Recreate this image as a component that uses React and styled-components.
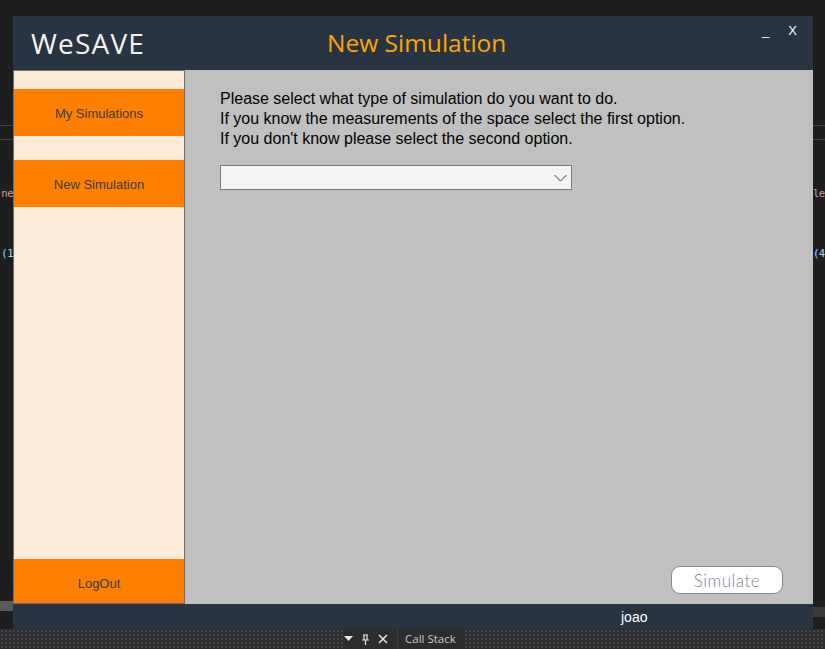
import React from "react";
import styled, { createGlobalStyle } from "styled-components";

const GlobalStyle = createGlobalStyle`
  html, body {
    margin: 0;
    padding: 0;
    background: #1e1e1e;
  }
  * { box-sizing: border-box; }
`;

// IDE behind the app window
const Screen = styled.div`
  width: 825px;
  height: 649px;
  display: flex;
  flex-direction: column;
  background: #1e1e1e;
  overflow: hidden;
`;

const Workspace = styled.div`
  display: flex;
  height: 629px;
`;

const Gutter = styled.div`
  width: ${({ w }) => w}px;
  display: flex;
  flex-direction: column;
  align-items: ${({ side }) => (side === "left" ? "flex-end" : "flex-start")};
  padding-top: 125px;
  overflow: hidden;
  font-family: "DejaVu Sans Mono", "Liberation Mono", monospace;
  font-size: 10.5px;
  letter-spacing: -0.5px;
`;

const GutterTabs = styled.div`
  align-self: stretch;
  height: 15px;
  border-top: 1px solid #3f3f46;
  border-bottom: 1px solid #3f3f46;
`;

const CodeText = styled.div`
  white-space: nowrap;
  color: ${({ c }) => c};
  margin-top: ${({ mt }) => mt}px;
  line-height: 14px;
`;

const GutterBand = styled.div`
  align-self: stretch;
  margin-top: auto;
  height: 10px;
  background: ${({ c }) => c};
  margin-bottom: ${({ mb }) => mb}px;
`;

const WindowSlot = styled.div`
  width: 800px;
  padding-top: 16px;
`;

const Window = styled.div`
  height: 613px;
  display: grid;
  grid-template-rows: 54px 1fr 25px;
  background: #c0c0c0;
`;

const TitleBar = styled.div`
  display: flex;
  align-items: center;
  background: #283442;
  padding-left: 18px;
`;

const Brand = styled.div`
  width: 296px;
  font-family: "Open Sans", "DejaVu Sans", sans-serif;
  font-size: 28px;
  letter-spacing: 1.2px;
  color: #f4f4f4;
  line-height: 1;
`;

const PageTitle = styled.div`
  font-family: "Open Sans", "DejaVu Sans", sans-serif;
  font-size: 24.5px;
  color: #ffa500;
  line-height: 1;
`;

const Controls = styled.div`
  margin-left: auto;
  align-self: flex-start;
  display: flex;
  gap: 19px;
  padding: 7px 16px 0 0;
  font-family: "Liberation Sans", Arial, sans-serif;
  font-size: 13px;
  color: #ffffff;
`;

const Body = styled.div`
  display: flex;
  min-height: 0;
`;

const Sidebar = styled.nav`
  width: 172px;
  display: flex;
  flex-direction: column;
  background: #faebd7;
  border: 1px solid #6d6d6d;
  padding-top: 18px;
`;

const NavButton = styled.div`
  height: ${({ h }) => h}px;
  margin-bottom: ${({ gap }) => gap || 0}px;
  margin-top: ${({ bottom }) => (bottom ? "auto" : "0")};
  padding-top: ${({ bottom }) => (bottom ? 4 : 2)}px;
  display: flex;
  align-items: center;
  justify-content: center;
  background: #ff8000;
  font-family: "Liberation Sans", Arial, sans-serif;
  font-size: 13px;
  color: #3c3c3c;
`;

const Main = styled.main`
  flex: 1;
  display: flex;
  flex-direction: column;
  padding: 19px 30px 10px 35px;
  background: #c0c0c0;
`;

const Intro = styled.p`
  margin: 0;
  font-family: "Liberation Sans", Arial, sans-serif;
  font-size: 16px;
  line-height: 20px;
  color: #000;
`;

const Select = styled.div`
  width: 352px;
  height: 25px;
  margin-top: 16px;
  display: flex;
  align-items: center;
  justify-content: flex-end;
  padding-right: 4px;
  background: #f4f4f4;
  border: 1px solid #7a7a7a;
`;

const SimulateButton = styled.button`
  margin-top: auto;
  align-self: flex-end;
  width: 112px;
  height: 28px;
  background: #fff;
  border: 1px solid #7d8a99;
  border-radius: 9px;
  font-family: "Lato", "Open Sans", sans-serif;
  font-weight: 300;
  font-size: 17px;
  letter-spacing: 0.5px;
  color: #7b8696;
  padding: 0;
`;

const Footer = styled.div`
  display: flex;
  align-items: center;
  padding: 1px 0 0 608px;
  background: #283442;
  font-family: "Liberation Sans", Arial, sans-serif;
  font-size: 14px;
  color: #fff;
`;

const PanelBar = styled.div`
  height: 20px;
  display: flex;
  align-items: center;
  background-color: #2d2d30;
  background-image: radial-gradient(#46464a 0.8px, transparent 0.9px);
  background-size: 4px 4px;
  padding-left: 344px;
  font-family: "Open Sans", "DejaVu Sans", sans-serif;
  font-size: 11.5px;
  color: #c8c8c8;
`;

const PanelIcons = styled.div`
  display: flex;
  align-items: center;
  gap: 8px;
  background: #2d2d30;
  padding-right: 9px;
  border-right: 1px solid #3f3f46;
  height: 20px;
`;

const PanelTab = styled.span`
  background: #2d2d30;
  padding: 0 8px 0 7px;
  line-height: 20px;
`;

const Chevron = () => (
  <svg width="13" height="8" viewBox="0 0 13 8">
    <polyline points="0.5,1 6.5,7 12.5,1" fill="none" stroke="#333" strokeWidth="1" />
  </svg>
);

const PanelGlyphs = () => (
  <PanelIcons>
    <svg width="9" height="6" viewBox="0 0 9 6">
      <polygon points="0,0 9,0 4.5,5" fill="#e8e8e8" />
    </svg>
    <svg width="9" height="11" viewBox="0 0 9 11">
      <path d="M2 1h5M3 1v5M6 1v5M1 6h7M4.5 6v5" stroke="#e8e8e8" strokeWidth="1.2" fill="none" />
    </svg>
    <svg width="10" height="10" viewBox="0 0 10 10">
      <path d="M1 1l8 8M9 1l-8 8" stroke="#e8e8e8" strokeWidth="1.5" />
    </svg>
  </PanelIcons>
);

const App = () => (
  <>
    <GlobalStyle />
    <Screen>
      <Workspace>
        <Gutter w={13} side="left">
          <GutterTabs />
          <CodeText c="#d69d85" mt={46}>ne</CodeText>
          <CodeText c="#9cdcfe" mt={46}>(1</CodeText>
          <GutterBand c="#5a5a5e" mb={18} />
        </Gutter>
        <WindowSlot>
          <Window>
            <TitleBar>
              <Brand>WeSAVE</Brand>
              <PageTitle>New Simulation</PageTitle>
              <Controls>
                <span>_</span>
                <span>X</span>
              </Controls>
            </TitleBar>
            <Body>
              <Sidebar>
                <NavButton h={47} gap={24}>My Simulations</NavButton>
                <NavButton h={47}>New Simulation</NavButton>
                <NavButton h={44} bottom>LogOut</NavButton>
              </Sidebar>
              <Main>
                <Intro>
                  Please select what type of simulation do you want to do.
                  <br />
                  If you know the measurements of the space select the first option.
                  <br />
                  If you don't know please select the second option.
                </Intro>
                <Select>
                  <Chevron />
                </Select>
                <SimulateButton>Simulate</SimulateButton>
              </Main>
            </Body>
            <Footer>joao</Footer>
          </Window>
        </WindowSlot>
        <Gutter w={12} side="right">
          <GutterTabs />
          <CodeText c="#d69d85" mt={46}>le</CodeText>
          <CodeText c="#9cdcfe" mt={46}>(4</CodeText>
          <GutterBand c="#3a3a3e" mb={12} />
        </Gutter>
      </Workspace>
      <PanelBar>
        <PanelGlyphs />
        <PanelTab>Call Stack</PanelTab>
      </PanelBar>
    </Screen>
  </>
);

export default App;
